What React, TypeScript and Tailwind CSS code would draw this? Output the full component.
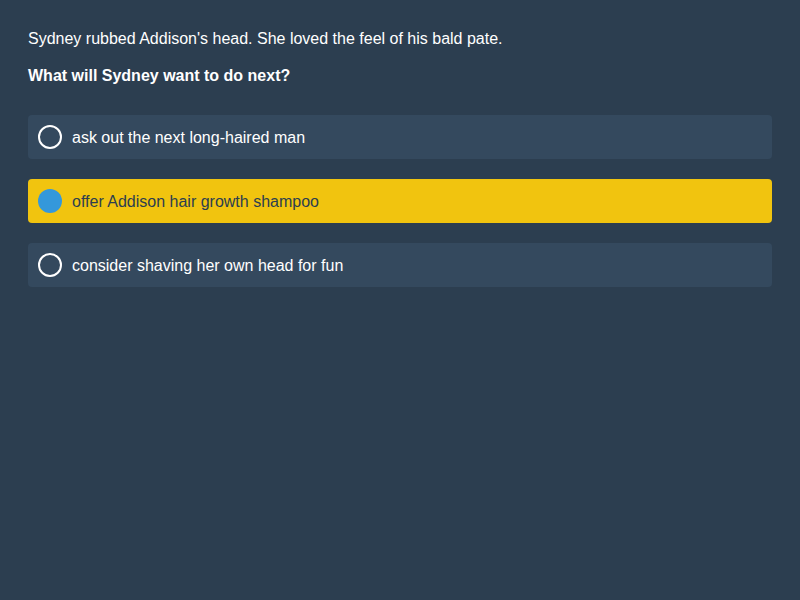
import React from "react";

const options = [
  { text: "ask out the next long-haired man", selected: false },
  { text: "offer Addison hair growth shampoo", selected: true },
  { text: "consider shaving her own head for fun", selected: false },
];

export default function App() {
  return (
    <div
      className="w-[800px] h-[600px] bg-[#2c3e50] px-[28px] pt-[29px] text-white text-[16px]"
      style={{ fontFamily: '"Liberation Sans", Arial, sans-serif' }}
    >
      <p className="leading-[20px]">Sydney rubbed Addison's head. She loved the feel of his bald pate.</p>
      <p className="leading-[20px] font-bold mt-[17px]">What will Sydney want to do next?</p>
      <div className="mt-[29px] flex flex-col gap-[20px]">
        {options.map((o) => (
          <div
            key={o.text}
            className={`h-[44px] rounded-[4px] flex items-center px-[10px] gap-[10px] ${
              o.selected ? "bg-[#f1c40f] text-[#2c3e50]" : "bg-[#34495e] text-white"
            }`}
          >
            {o.selected ? (
              <span className="w-[24px] h-[24px] rounded-full bg-[#3498db] shrink-0" />
            ) : (
              <span className="w-[24px] h-[24px] rounded-full border-2 border-white shrink-0" />
            )}
            <span className="leading-[20px] pt-[2px]">{o.text}</span>
          </div>
        ))}
      </div>
    </div>
  );
}
